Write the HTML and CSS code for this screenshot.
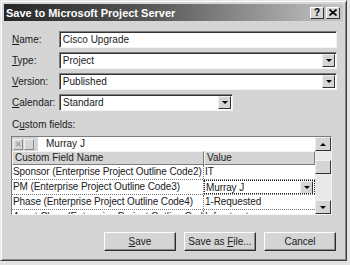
FILE: index.html
```html
<!DOCTYPE html>
<html lang="en">
<head>
<meta charset="utf-8">
<title>Save to Microsoft Project Server</title>
<link rel="stylesheet" href="styles.css">
</head>
<body>
<div class="dialog">
	<div class="titlebar">
		<span class="title">Save to Microsoft Project Server</span>
		<div class="tbtns">
			<span class="tbtn">?</span>
			<span class="tbtn"><svg width="8" height="7" viewBox="0 0 8 7"><path d="M0.5 0.5L7.5 6.5M7.5 0.5L0.5 6.5" stroke="#000" stroke-width="1.6"/></svg></span>
		</div>
	</div>

	<div class="form">
		<div class="field">
			<label><u>N</u>ame:</label>
			<div class="input wide">Cisco Upgrade</div>
		</div>
		<div class="field">
			<label><u>T</u>ype:</label>
			<div class="input wide combo">Project<span class="drop"><i></i></span></div>
		</div>
		<div class="field">
			<label><u>V</u>ersion:</label>
			<div class="input wide combo">Published<span class="drop"><i></i></span></div>
		</div>
		<div class="field">
			<label><u>C</u>alendar:</label>
			<div class="input cal combo">Standard<span class="drop"><i></i></span></div>
		</div>

		<div class="cflabel">C<u>u</u>stom fields:</div>

		<div class="grid">
			<div class="gmain">
				<div class="editrow">
					<span class="ebtn">&#x2715;</span>
					<span class="ebtn"></span>
					<div class="einput">Murray J</div>
				</div>
				<div class="hdr">
					<div class="hcell cname">Custom Field Name</div>
					<div class="hcell cval">Value</div>
				</div>
				<div class="row">
					<div class="cell cname">Sponsor (Enterprise Project Outline Code2)</div>
					<div class="cell cval">IT</div>
				</div>
				<div class="row">
					<div class="cell cname">PM (Enterprise Project Outline Code3)</div>
					<div class="cell cval focus">Murray J<span class="drop"><i></i></span></div>
				</div>
				<div class="row">
					<div class="cell cname">Phase (Enterprise Project Outline Code4)</div>
					<div class="cell cval">1-Requested</div>
				</div>
				<div class="row">
					<div class="cell cname">Asset Class (Enterprise Project Outline Code5)</div>
					<div class="cell cval">Infrastructure</div>
				</div>
			</div>
			<div class="vscroll">
				<span class="sbtn"><i class="up"></i></span>
				<div class="track"><span class="thumb"></span></div>
				<span class="sbtn"><i></i></span>
			</div>
		</div>

		<div class="buttons">
			<span class="btn"><span><u>S</u>ave</span></span>
			<span class="btn"><span>Save as <u>F</u>ile...</span></span>
			<span class="btn"><span>Cancel</span></span>
		</div>
	</div>
</div>
</body>
</html>
```
FILE: styles.css
```css
body {
	margin: 0;
	background-color: #e4e4e4;
	font-family: "Liberation Sans", Arial, sans-serif;
	font-size: 10px;
	color: #1a1a1a;
}
.dialog {
	width: 347px;
	height: 261px;
	box-sizing: border-box;
	padding: 3px;
	background-color: #d5d5d5;
	border: 1px solid;
	border-color: #e6e6e6 #3c3c3c #3c3c3c #e6e6e6;
	box-shadow: inset 1px 1px #fff, inset -1px -1px #8a8a8a;
}
.titlebar {
	height: 17px;
	display: flex;
	align-items: center;
	justify-content: space-between;
	padding: 0 3px 0 2px;
	background: linear-gradient(to right, #262626, #5a5a5a 45%, #c6c6c6);
}
.title {
	color: #fff;
	font-size: 11px;
	font-weight: bold;
}
.tbtns {
	display: flex;
	gap: 2px;
}
.tbtn {
	width: 14px;
	height: 12px;
	box-sizing: border-box;
	display: flex;
	align-items: center;
	justify-content: center;
	background-color: #d5d5d5;
	border: 1px solid;
	border-color: #fff #333 #333 #fff;
	font-size: 10px;
	font-weight: bold;
	color: #000;
}
.form {
	padding: 10px 6px 0 8px;
}
.field {
	display: flex;
	align-items: center;
	height: 17px;
	margin-bottom: 4px;
}
.field label {
	width: 47px;
}
.input {
	position: relative;
	height: 17px;
	box-sizing: border-box;
	padding: 0 3px;
	display: flex;
	align-items: center;
	background-color: #fff;
	border: 1px solid;
	border-color: #7c7c7c #f4f4f4 #f4f4f4 #7c7c7c;
	box-shadow: inset 1px 1px #333;
}
.wide {
	width: 279px;
}
.cal {
	width: 174px;
}
.drop {
	position: absolute;
	right: 1px;
	top: 1px;
	width: 13px;
	height: 13px;
	box-sizing: border-box;
	display: flex;
	align-items: center;
	justify-content: center;
	background-color: #d5d5d5;
	border: 1px solid;
	border-color: #f0f0f0 #333 #333 #f0f0f0;
}
.drop i, .sbtn i {
	width: 0;
	height: 0;
	border-left: 3px solid transparent;
	border-right: 3px solid transparent;
	border-top: 3px solid #000;
}
.sbtn i.up {
	border-top: 0;
	border-bottom: 3px solid #000;
}
.cflabel {
	margin-top: 8px;
	height: 12px;
	line-height: 12px;
}
.grid {
	margin: 5px 0 0 -1px;
	width: 321px;
	height: 79px;
	box-sizing: border-box;
	display: flex;
	overflow: hidden;
	border: 1px solid;
	border-color: #7c7c7c #f4f4f4 #f4f4f4 #7c7c7c;
	background-color: #fff;
}
.gmain {
	flex: 1;
	overflow: hidden;
}
.editrow {
	height: 14px;
	display: flex;
	align-items: center;
	gap: 1px;
	padding-left: 1px;
	background-color: #d5d5d5;
}
.ebtn {
	width: 10px;
	height: 11px;
	box-sizing: border-box;
	display: flex;
	align-items: center;
	justify-content: center;
	border: 1px solid;
	border-color: #f0f0f0 #8a8a8a #8a8a8a #f0f0f0;
	font-size: 8px;
	color: #8a8a8a;
}
.einput {
	flex: 1;
	height: 14px;
	margin-left: 3px;
	padding-left: 8px;
	line-height: 14px;
	background-color: #fff;
}
.hdr {
	height: 14px;
	display: flex;
	background-color: #d5d5d5;
}
.hcell {
	box-sizing: border-box;
	padding-left: 2px;
	line-height: 12px;
	border: 1px solid;
	border-color: #f4f4f4 #7c7c7c #7c7c7c #f4f4f4;
}
.cname {
	width: 192px;
	flex: none;
}
.cval {
	flex: 1;
}
.row {
	height: 15px;
	display: flex;
	border-bottom: 1px dotted #777;
	box-sizing: border-box;
}
.cell {
	position: relative;
	box-sizing: border-box;
	padding-left: 1px;
	line-height: 14px;
	letter-spacing: -0.1px;
	white-space: nowrap;
	overflow: hidden;
}
.cell.cname {
	border-right: 1px dotted #777;
}
.focus {
	border: 1px dotted #222;
}
.focus .drop {
	top: 0;
	right: 1px;
}
.vscroll {
	width: 16px;
	display: flex;
	flex-direction: column;
	flex: none;
}
.sbtn {
	height: 14px;
	box-sizing: border-box;
	display: flex;
	align-items: center;
	justify-content: center;
	background-color: #d5d5d5;
	border: 1px solid;
	border-color: #f0f0f0 #333 #333 #f0f0f0;
}
.track {
	flex: 1;
	padding-top: 9px;
	background-color: #e9e9e9;
}
.thumb {
	display: block;
	height: 14px;
	box-sizing: border-box;
	background-color: #d5d5d5;
	border: 1px solid;
	border-color: #f0f0f0 #333 #333 #f0f0f0;
}
.buttons {
	display: flex;
	justify-content: flex-end;
	gap: 8px;
	margin-top: 17px;
	padding-right: 1px;
}
.btn {
	width: 72px;
	height: 19px;
	box-sizing: border-box;
	display: flex;
	align-items: center;
	justify-content: center;
	border: 1px solid;
	border-color: #fff #2e2e2e #2e2e2e #fff;
	box-shadow: inset -1px -1px #8a8a8a;
}
```
